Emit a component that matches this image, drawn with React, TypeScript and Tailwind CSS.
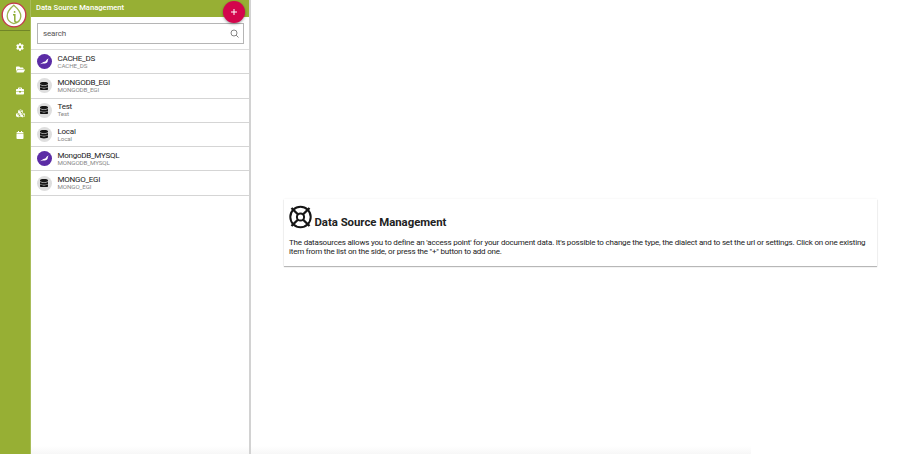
import { FaBriefcase, FaCalendar, FaCog, FaCubes, FaDatabase, FaFolderOpen } from "react-icons/fa";

type Source = { name: string; label: string; cache?: boolean };

const sources: Source[] = [
  { name: "CACHE_DS", label: "CACHE_DS", cache: true },
  { name: "MONGODB_EGI", label: "MONGODB_EGI" },
  { name: "Test", label: "Test" },
  { name: "Local", label: "Local" },
  { name: "MongoDB_MYSQL", label: "MONGODB_MYSQL", cache: true },
  { name: "MONGO_EGI", label: "MONGO_EGI" },
];

function Logo() {
  return (
    <svg viewBox="0 0 26 26" className="size-[26px]" fill="none">
      <circle cx="13" cy="13" r="11.8" fill="#fff" stroke="#c4354b" strokeWidth="1.3" />
      <path d="M12.8 3.2C8 7.2 6 11 6.2 14.2c.2 3.6 2.8 6.4 6.6 7.4 4-.8 6.8-3.8 7-7.2.2-3.4-2.5-7.4-7-11.2Z" stroke="#9db650" strokeWidth="1.3" />
      <path d="M12 12.8h1.8v5.6c0 1.6.8 2 2 1.4" stroke="#8ead35" strokeWidth="1.5" />
      <circle cx="13.6" cy="9.9" r=".9" fill="#8ead35" />
    </svg>
  );
}

function Bird() {
  return (
    <svg viewBox="0 0 15 15" className="size-[15px]" fill="#fff">
      <path d="m3 10.2 3.4-2.2 1.9-.6 1.8-2.2 1.8-.6-.9.9-.5 2.6-1.1.9-1.5.5-2.1.1Z" />
    </svg>
  );
}

function Wheel() {
  return (
    <svg viewBox="0 0 24 24" className="size-6 shrink-0" fill="none" stroke="#161616">
      <circle cx="11.5" cy="12" r="10.2" strokeWidth="2" />
      <circle cx="11.5" cy="12" r="3.6" strokeWidth="2" />
      <path d="m2.5 3 6.3 6.3m5.4 5.4 6.3 6.3m0-18-6.3 6.3m-5.4 5.4L2.5 21" strokeWidth="2.3" />
    </svg>
  );
}

export default function App() {
  return (
    <div className="flex h-[454px] w-[900px] overflow-hidden bg-white font-['Roboto',sans-serif] text-[#222]">
      <nav className="flex w-[31px] shrink-0 flex-col border-r border-[#a9bd5b] bg-[#97af34]">
        <div className="h-[31px] border-b border-[#718527] pt-[1.5px] pl-[1px]"><Logo /></div>
        <div className="flex flex-col items-center gap-[13.6px] pt-[12px] pl-[10px] text-[8px] text-white">
          <FaCog />
          <FaFolderOpen className="text-[9px]" />
          <FaBriefcase />
          <FaCubes className="text-[9px]" />
          <FaCalendar />
        </div>
      </nav>
      <aside className="relative w-[220px] shrink-0 border-r-2 border-[#d2d2d2]">
        <header className="h-[17px] bg-[#97af34] pl-[5px] text-[7.6px] leading-[16px] font-medium text-white">Data Source Management</header>
        <button className="absolute top-[1px] right-[4px] flex size-[22px] items-center justify-center rounded-full bg-[#d3054c] shadow-[0_1px_3px_#0006]">
          <svg viewBox="0 0 8 8" className="size-2" stroke="#fff"><path d="M4 1v6M1 4h6" /></svg>
        </button>
        <div className="h-[33px] border-b border-[#dedede] pt-[6px] pr-[5px] pl-[6px]">
          <div className="flex h-[21px] items-center justify-between border border-[#b5b5b5] pr-[4px] pl-[5px] text-[8px] tracking-[-0.18px] text-[#555]">
            <span>search</span>
            <svg viewBox="0 0 9 9" className="size-[9px]" fill="none" stroke="#777" strokeWidth=".9"><circle cx="4" cy="4" r="3" /><path d="m6.2 6.2 2.3 2.3" /></svg>
          </div>
        </div>
        {sources.map((s) => (
          <div key={s.name} className="flex h-[24.3px] items-center border-b border-[#d5d5d5] pl-[5.5px]">
            {s.cache ? (
              <span className="flex size-[15px] items-center justify-center rounded-full bg-[#5b2ca5]"><Bird /></span>
            ) : (
              <span className="flex size-[15px] items-center justify-center rounded-full bg-[#dedede] text-[#151515]"><FaDatabase className="h-[8.5px] w-[8px]" preserveAspectRatio="none" /></span>
            )}
            <div className="pt-[1px] pl-[6px]">
              <div className="text-[8px] leading-[8px] tracking-[-0.25px]">{s.name}</div>
              <div className="text-[6.2px] leading-[7px] tracking-[-0.1px] text-[#888]">{s.label}</div>
            </div>
          </div>
        ))}
        <div className="absolute inset-x-0 bottom-0 h-2 bg-linear-to-t from-[#f7f7f7] to-white" />
      </aside>
      <main className="flex flex-1 flex-col pt-[199px]">
        <section className="ml-[33px] h-[67px] w-[593px] px-[5px] pt-[6px] shadow-[0_1px_1px_#0004,0_0_2px_#0001]">
          <div className="flex h-6 gap-[1.5px]">
            <Wheel />
            <h1 className="pt-[10px] text-[11.4px] leading-[15px] font-bold tracking-[-0.03px] whitespace-nowrap">Data Source Management</h1>
          </div>
          <p className="pt-[9px] text-[8px] leading-[9px] tracking-[-0.195px] whitespace-nowrap">
            The datasources allows you to define an 'access point' for your document data. It's possible to change the type, the dialect and to set the url or settings. Click on one existing
            <br />item from the list on the side, or press the "+" button to add one.
          </p>
        </section>
        <div className="mt-auto h-2 w-[500px] bg-linear-to-t from-[#f7f7f7] to-white" />
      </main>
    </div>
  );
}
